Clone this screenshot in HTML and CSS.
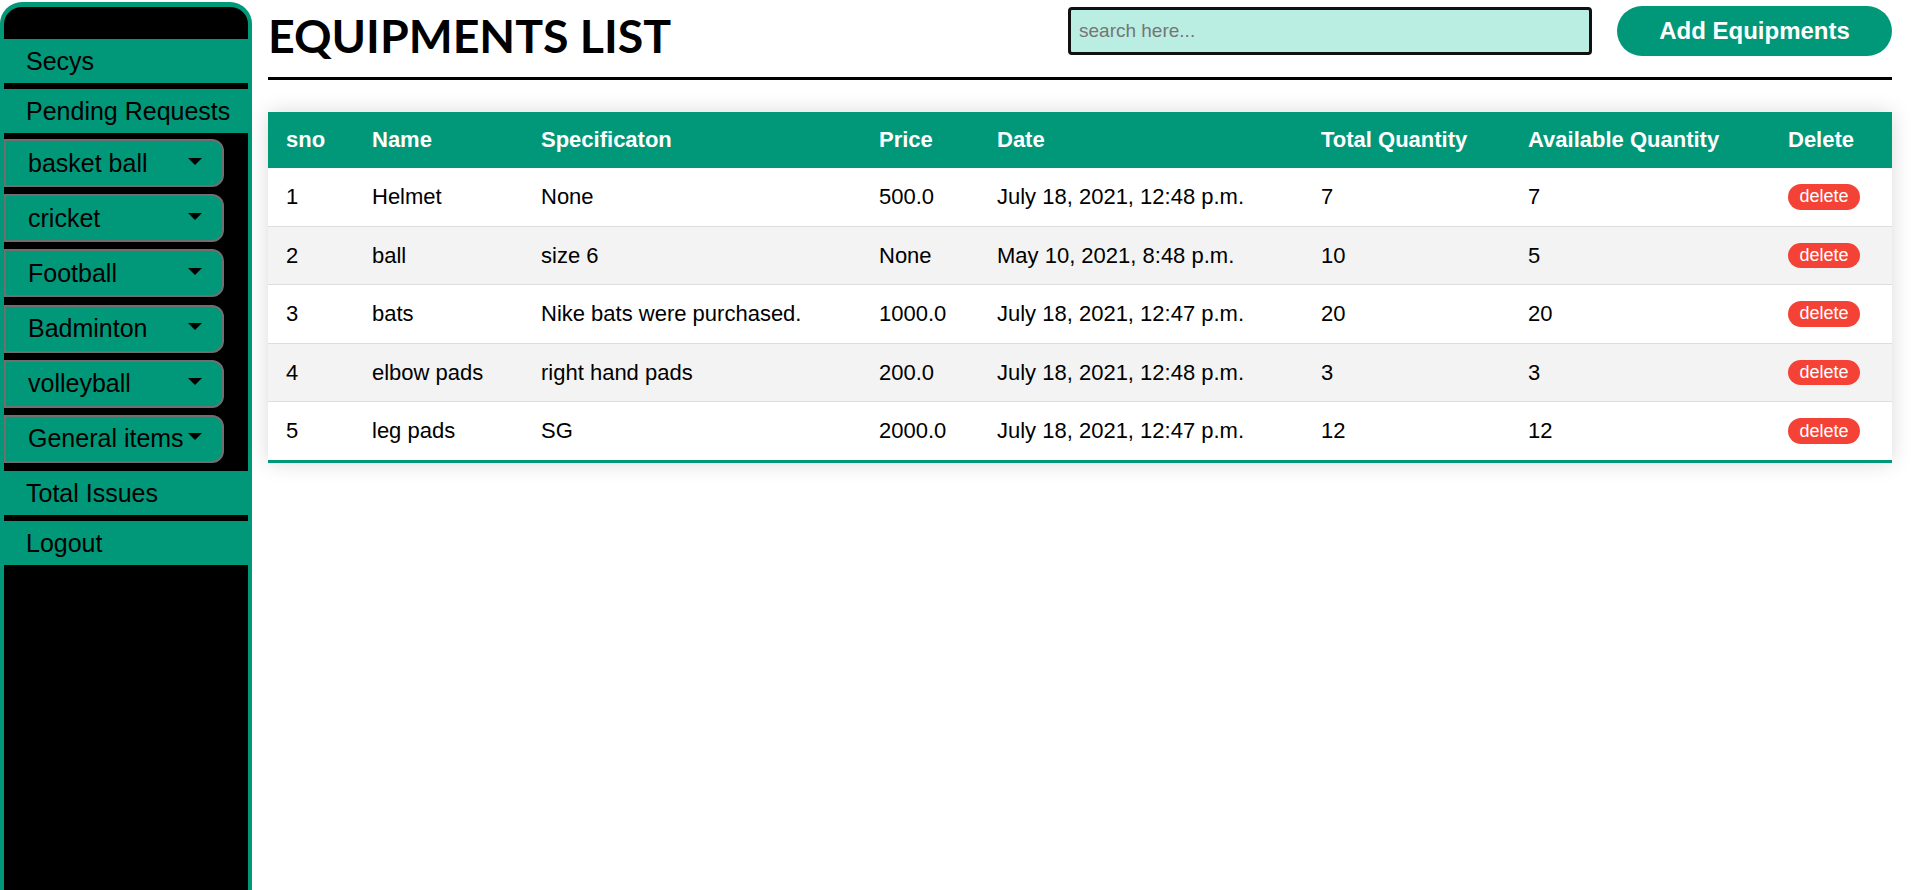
FILE: index.html
```html
<!DOCTYPE html>
<html lang="en">
<head>
<meta charset="utf-8">
<title>Equipments List</title>
<link rel="stylesheet" href="styles.css">
</head>
<body>
<div class="layout">
  <aside class="sidebar">
    <a class="side-link" href="#">Secys</a>
    <a class="side-link" href="#">Pending Requests</a>
    <div class="dropdowns">
      <button class="dd-btn"><span>basket ball</span><span class="caret"></span></button>
      <button class="dd-btn"><span>cricket</span><span class="caret"></span></button>
      <button class="dd-btn"><span>Football</span><span class="caret"></span></button>
      <button class="dd-btn"><span>Badminton</span><span class="caret"></span></button>
      <button class="dd-btn"><span>volleyball</span><span class="caret"></span></button>
      <button class="dd-btn"><span>General items</span><span class="caret"></span></button>
    </div>
    <a class="side-link" href="#">Total Issues</a>
    <a class="side-link" href="#">Logout</a>
  </aside>
  <main class="main">
    <header class="topbar">
      <h1 class="title">EQUIPMENTS LIST</h1>
      <input class="search" type="text" placeholder="search here...">
      <button class="add-btn">Add Equipments</button>
    </header>
    <table class="styled-table">
      <colgroup>
        <col class="c-sno"><col class="c-name"><col class="c-spec"><col class="c-price">
        <col class="c-date"><col class="c-total"><col class="c-avail"><col class="c-del">
      </colgroup>
      <thead>
        <tr>
          <th>sno</th><th>Name</th><th>Specificaton</th><th>Price</th><th>Date</th><th>Total Quantity</th><th>Available Quantity</th><th>Delete</th>
        </tr>
      </thead>
      <tbody>
        <tr><td>1</td><td>Helmet</td><td>None</td><td>500.0</td><td>July 18, 2021, 12:48 p.m.</td><td>7</td><td>7</td><td><button class="del-btn">delete</button></td></tr>
        <tr><td>2</td><td>ball</td><td>size 6</td><td>None</td><td>May 10, 2021, 8:48 p.m.</td><td>10</td><td>5</td><td><button class="del-btn">delete</button></td></tr>
        <tr><td>3</td><td>bats</td><td>Nike bats were purchased.</td><td>1000.0</td><td>July 18, 2021, 12:47 p.m.</td><td>20</td><td>20</td><td><button class="del-btn">delete</button></td></tr>
        <tr><td>4</td><td>elbow pads</td><td>right hand pads</td><td>200.0</td><td>July 18, 2021, 12:48 p.m.</td><td>3</td><td>3</td><td><button class="del-btn">delete</button></td></tr>
        <tr><td>5</td><td>leg pads</td><td>SG</td><td>2000.0</td><td>July 18, 2021, 12:47 p.m.</td><td>12</td><td>12</td><td><button class="del-btn">delete</button></td></tr>
      </tbody>
    </table>
  </main>
</div>
</body>
</html>
```
FILE: styles.css
```css
html, body {
  margin: 0;
  padding: 0;
  background: #ffffff;
  overflow: hidden;
}
body {
  font-family: "Liberation Sans", Arial, sans-serif;
  color: #000;
}
.layout {
  display: flex;
  align-items: flex-start;
}
.sidebar {
  flex: 0 0 252px;
  box-sizing: border-box;
  width: 252px;
  height: calc(100vh - 2px);
  margin-top: 2px;
  background: #000;
  border: 4px solid #009879;
  border-top-width: 5px;
  border-bottom: none;
  border-radius: 22px 22px 0 0;
  padding-top: 32px;
  display: flex;
  flex-direction: column;
}
.side-link {
  display: block;
  height: 44px;
  line-height: 44px;
  background: #009879;
  color: #000;
  text-decoration: none;
  font-size: 25px;
  padding-left: 22px;
  margin-bottom: 6px;
  white-space: nowrap;
}
.dropdowns {
  display: flex;
  flex-direction: column;
  gap: 7.2px;
  margin-bottom: 8px;
}
.dd-btn {
  box-sizing: border-box;
  width: 220px;
  height: 48px;
  background: #009879;
  border: 2px solid #6f6f6f;
  border-radius: 0 12px 12px 0;
  display: flex;
  align-items: center;
  justify-content: space-between;
  gap: 4px;
  padding: 0 18px 0 22px;
  font-family: "Liberation Sans", Arial, sans-serif;
  font-size: 25px;
  color: #000;
  text-align: left;
  white-space: nowrap;
}
.caret {
  width: 0;
  height: 0;
  border-left: 7px solid transparent;
  border-right: 7px solid transparent;
  border-top: 7px solid #000;
  margin-top: -4px;
  margin-right: 2px;
  flex-shrink: 0;
}
.main {
  flex: 1;
  padding: 0 22px 0 16px;
}
.topbar {
  display: flex;
  align-items: flex-start;
  padding-top: 6px;
  padding-bottom: 21px;
  border-bottom: 3px solid #000;
  height: 50px;
}
.title {
  margin: 9px auto 0 0;
  font-family: Lato, "Liberation Sans", sans-serif;
  font-weight: 700;
  font-size: 46.5px;
  line-height: 40px;
  white-space: nowrap;
}
.search {
  box-sizing: border-box;
  width: 524px;
  height: 48px;
  margin-top: 1px;
  margin-right: 25px;
  background: #bbeee2;
  border: 3px solid #111;
  border-radius: 4px;
  padding: 0 8px;
  font-family: "Liberation Sans", Arial, sans-serif;
  font-size: 19px;
  outline: none;
}
.search::placeholder {
  color: #757575;
}
.add-btn {
  box-sizing: border-box;
  width: 275px;
  height: 50px;
  border: none;
  border-radius: 25px;
  background: #009879;
  color: #fff;
  font-family: "Liberation Sans", Arial, sans-serif;
  font-weight: 700;
  font-size: 24px;
}
.styled-table {
  margin-top: 32px;
  width: 100%;
  table-layout: fixed;
  border-collapse: collapse;
  font-size: 22px;
  box-shadow: 0 0 20px rgba(0, 0, 0, 0.15);
}
.c-sno { width: 86px; }
.c-name { width: 169px; }
.c-spec { width: 338px; }
.c-price { width: 118px; }
.c-date { width: 324px; }
.c-total { width: 207px; }
.c-avail { width: 260px; }
.c-del { width: 122px; }
.styled-table thead tr {
  background: #009879;
  color: #fff;
  text-align: left;
}
.styled-table th {
  padding: 15px 18px;
  line-height: 26px;
  font-weight: 700;
  white-space: nowrap;
}
.styled-table td {
  padding: 16px 18px;
  line-height: 25.6px;
  white-space: nowrap;
}
.styled-table tbody tr {
  border-bottom: 1px solid #dddddd;
}
.styled-table tbody tr:nth-of-type(even) {
  background: #f3f3f3;
}
.styled-table tbody tr:last-of-type {
  border-bottom: 3px solid #009879;
}
.del-btn {
  display: block;
  width: 72px;
  height: 25.6px;
  border: none;
  border-radius: 13px;
  background: #f44336;
  color: #fff;
  font-family: "Liberation Sans", Arial, sans-serif;
  font-size: 18px;
  line-height: 25px;
  padding: 0;
}
```
